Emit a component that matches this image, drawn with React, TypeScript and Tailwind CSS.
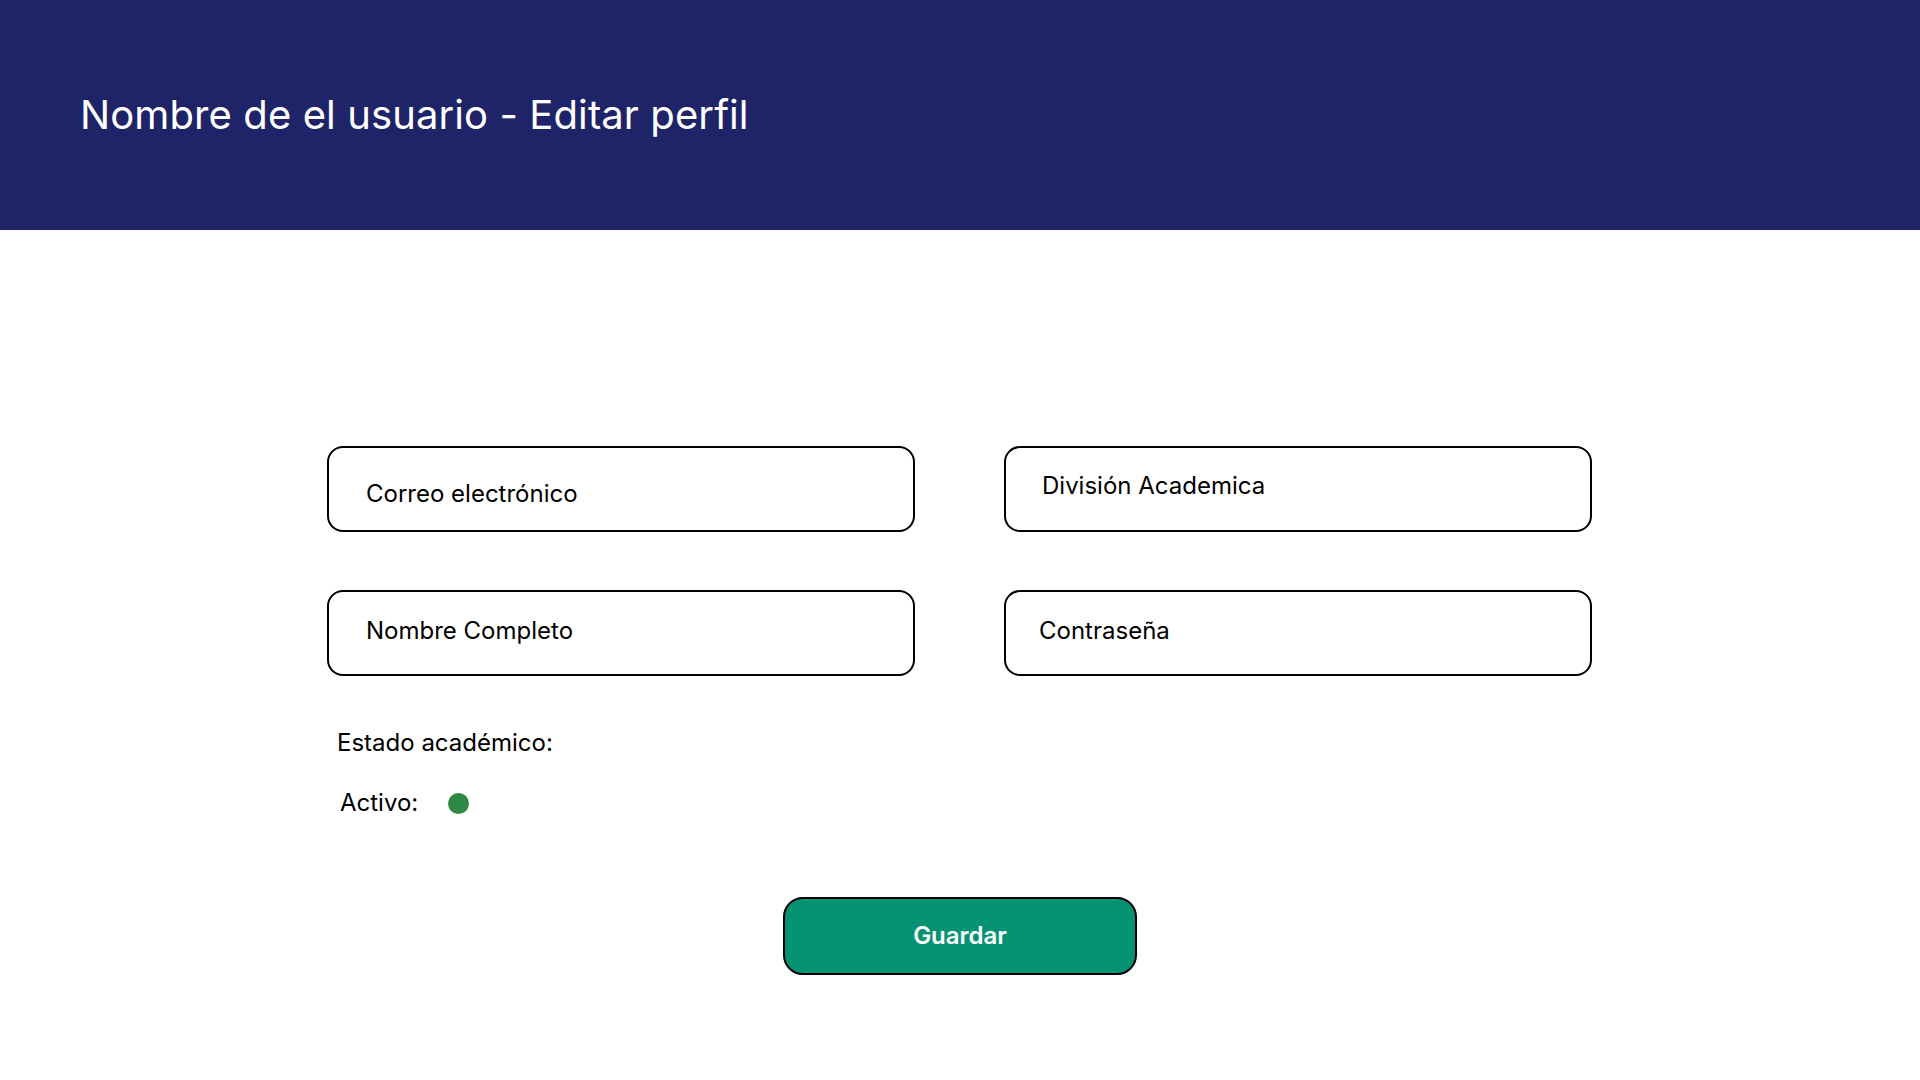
import React from "react";

const fields = [
  { label: "Correo electrónico", extra: "pt-[9px] pl-[37px]" },
  { label: "División Academica", extra: "pb-[7px] pl-[36px]" },
  { label: "Nombre Completo", extra: "pb-[4px] pl-[37px]" },
  { label: "Contraseña", extra: "pb-[4px] pl-[33px]" },
];

export default function App() {
  return (
    <div className="min-h-screen bg-white font-['Inter','Liberation_Sans',sans-serif] text-black">
      <header className="h-[230px] bg-[#1e2467] flex items-center pl-[80px]">
        <h1 className="text-[40px] tracking-[0.1px] text-white leading-none pb-[1px]">
          Nombre de el usuario - Editar perfil
        </h1>
      </header>

      <main className="w-[1266px] mx-auto pt-[216px]">
        <div className="grid grid-cols-[588px_588px] gap-x-[89px] gap-y-[58px]">
          {fields.map((f) => (
            <div
              key={f.label}
              className={`h-[86px] border-2 border-black rounded-[16px] flex items-center text-[24px] ${f.extra}`}
            >
              {f.label}
            </div>
          ))}
        </div>

        <p className="mt-[51px] pl-[10px] text-[24px] leading-[32px]">
          Estado académico:
        </p>
        <div className="mt-[28px] pl-[13px] flex items-center gap-[30px] text-[24px] leading-[32px]">
          <span>Activo:</span>
          <span className="w-[21px] h-[21px] rounded-full bg-[#2c8a45]" />
        </div>

        <div className="mt-[78px] flex justify-center">
          <button className="w-[354px] h-[78px] bg-[#049372] border-2 border-black rounded-[20px] text-white text-[24px] font-semibold">
            Guardar
          </button>
        </div>
      </main>
    </div>
  );
}
